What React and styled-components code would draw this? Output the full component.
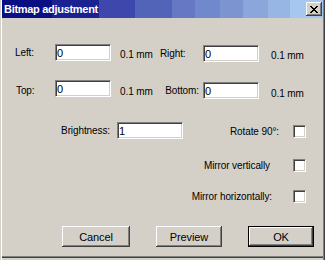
import React from 'react';
import styled, { createGlobalStyle } from 'styled-components';

const Global = createGlobalStyle`
  html, body { margin: 0; padding: 0; background: #d4d0c8; overflow: hidden; }
  * { box-sizing: border-box; }
`;

const Window = styled.div`
  width: 325px;
  height: 260px;
  padding: 0 2px 2px 2px;
  background: #d4d0c8;
  display: flex;
  flex-direction: column;
  font-family: "Liberation Sans", Arial, sans-serif;
  font-size: 10px;
  letter-spacing: -0.1px;
  color: #000;
  box-shadow: inset 1px 0 #d4d0c8, inset 2px 0 #fff, inset -1px 0 #404040, inset -2px 0 #808080;
`;

const TitleBar = styled.div`
  height: 18px;
  flex: none;
  display: flex;
  align-items: center;
  justify-content: space-between;
  padding: 0 1px 0 2px;
  background: linear-gradient(to right,
    #0b0f86 0px, #0b0f86 50px,
    #1c2192 50px, #1c2192 97px,
    #3e48ac 97px, #3e48ac 133px,
    #5264b8 133px, #5264b8 170px,
    #6678c4 170px, #6678c4 193px,
    #7088cc 193px, #7088cc 218px,
    #7c94d0 218px, #7c94d0 241px,
    #8aa6da 241px, #8aa6da 266px,
    #98b6e4 266px, #98b6e4 288px,
    #a6c8f0 288px, #a6c8f0 100%);
`;

const Title = styled.span`
  color: #fff;
  font-weight: bold;
  font-size: 11px;
  letter-spacing: -0.3px;
`;

const CloseButton = styled.div`
  width: 16px;
  height: 14px;
  background: #d4d0c8;
  display: flex;
  align-items: center;
  justify-content: center;
  box-shadow: inset -1px -1px #404040, inset 1px 1px #fff, inset -2px -2px #808080;
`;

const Content = styled.div`
  flex: 1;
  display: flex;
  flex-direction: column;
  box-shadow: inset 0 -1px #404040, inset 0 -2px #808080;
`;

const Fields = styled.div`
  display: flex;
  padding: 26px 0 0 13px;
`;

const FieldCol = styled.div`
  width: ${p => p.$w}px;
  display: flex;
  flex-direction: column;
  gap: ${p => p.$gap}px;
  padding-top: ${p => p.$top || 0}px;
`;

const FieldRow = styled.div`
  display: flex;
  align-items: center;
  height: 17px;
`;

const Label = styled.span`
  width: ${p => p.$w}px;
  flex: none;
  text-align: ${p => p.$align || 'left'};
  padding-top: ${p => p.$dy || 0}px;
  padding-right: ${p => p.$pr || 0}px;
  padding-left: ${p => p.$pl || 0}px;
  white-space: nowrap;
`;

const Unit = styled.span`
  margin-left: ${p => p.$ml}px;
  padding-top: ${p => p.$dy || 0}px;
  white-space: nowrap;
`;

const TextBox = styled.input`
  width: ${p => p.$w}px;
  height: 17px;
  flex: none;
  margin: 0;
  padding: 0 0 0 1px;
  background: #fff;
  border: 1px solid;
  border-color: #808080 #fff #fff #808080;
  box-shadow: inset 1px 1px #404040, inset -1px -1px #d4d0c8;
  font-family: "Liberation Sans", Arial, sans-serif;
  font-size: 11px;
  color: #000;
  outline: none;
`;

const Options = styled.div`
  display: flex;
  margin-top: 23px;
  padding: 0 17px 0 13px;
`;

const BrightnessGroup = styled.div`
  display: flex;
  align-items: center;
  height: 17px;
`;

const OptionList = styled.div`
  margin-left: auto;
  display: flex;
  flex-direction: column;
  padding-top: 3px;
`;

const OptionRow = styled.div`
  display: flex;
  align-items: center;
  justify-content: flex-end;
  height: 13px;
  margin-top: ${p => p.$mt || 0}px;
`;

const OptionLabel = styled.span`
  margin-right: ${p => 14 + (p.$pad || 0)}px;
  white-space: nowrap;
`;

const CheckBox = styled.div`
  width: 13px;
  height: 13px;
  flex: none;
  background: #fff;
  border: 1px solid;
  border-color: #808080 #fff #fff #808080;
  box-shadow: inset 1px 1px #404040, inset -1px -1px #d4d0c8;
`;

const Buttons = styled.div`
  display: flex;
  gap: 26px;
  margin-top: 23px;
  padding-left: 60px;
`;

const Button = styled.div`
  width: ${p => p.$w}px;
  height: 21px;
  display: flex;
  align-items: center;
  justify-content: center;
  font-size: 11px;
  background: #d4d0c8;
  border: ${p => (p.$default ? '1px solid #000' : 'none')};
  box-shadow: inset -1px -1px #404040, inset 1px 1px #fff, inset -2px -2px #808080;
`;

export default function App() {
  return (
    <>
      <Global />
      <Window>
        <TitleBar>
          <Title>Bitmap adjustment</Title>
          <CloseButton>
            <svg width="8" height="7" viewBox="0 0 8 7">
              <path d="M0 0h2v1h1v1h2V1h1V0h2v1H7v1H6v1H5v1h1v1h1v1h1v1H6V6H5V5H3v1H2v1H0V6h1V5h1V4h1V3H2V2H1V1H0z" fill="#000" />
            </svg>
          </CloseButton>
        </TitleBar>
        <Content>
          <Fields>
            <FieldCol $w={145} $gap={19}>
              <FieldRow>
                <Label $w={40}>Left:</Label>
                <TextBox $w={56} readOnly value="0" />
                <Unit $ml={9} $dy={4}>0.1 mm</Unit>
              </FieldRow>
              <FieldRow>
                <Label $w={40} $pl={1} $dy={3}>Top:</Label>
                <TextBox $w={56} readOnly value="0" />
                <Unit $ml={9} $dy={6}>0.1 mm</Unit>
              </FieldRow>
            </FieldCol>
            <FieldCol $w={160} $gap={20} $top={1}>
              <FieldRow>
                <Label $w={43}>Right:</Label>
                <TextBox $w={56} readOnly value="0" />
                <Unit $ml={12} $dy={3}>0.1 mm</Unit>
              </FieldRow>
              <FieldRow>
                <Label $w={43} $align="right" $pr={4}>Bottom:</Label>
                <TextBox $w={56} readOnly value="0" />
                <Unit $ml={12} $dy={5}>0.1 mm</Unit>
              </FieldRow>
            </FieldCol>
          </Fields>
          <Options>
            <BrightnessGroup>
              <Label $w={102} $align="right" $pr={7}>Brightness:</Label>
              <TextBox $w={66} readOnly value="1" />
            </BrightnessGroup>
            <OptionList>
              <OptionRow>
                <OptionLabel>Rotate 90°:</OptionLabel>
                <CheckBox />
              </OptionRow>
              <OptionRow $mt={21}>
                <OptionLabel $pad={9}>Mirror vertically</OptionLabel>
                <CheckBox />
              </OptionRow>
              <OptionRow $mt={18}>
                <OptionLabel $pad={7}>Mirror horizontally:</OptionLabel>
                <CheckBox />
              </OptionRow>
            </OptionList>
          </Options>
          <Buttons>
            <Button $w={68}>Cancel</Button>
            <Button $w={66}>Preview</Button>
            <Button $w={66} $default>OK</Button>
          </Buttons>
        </Content>
      </Window>
    </>
  );
}
